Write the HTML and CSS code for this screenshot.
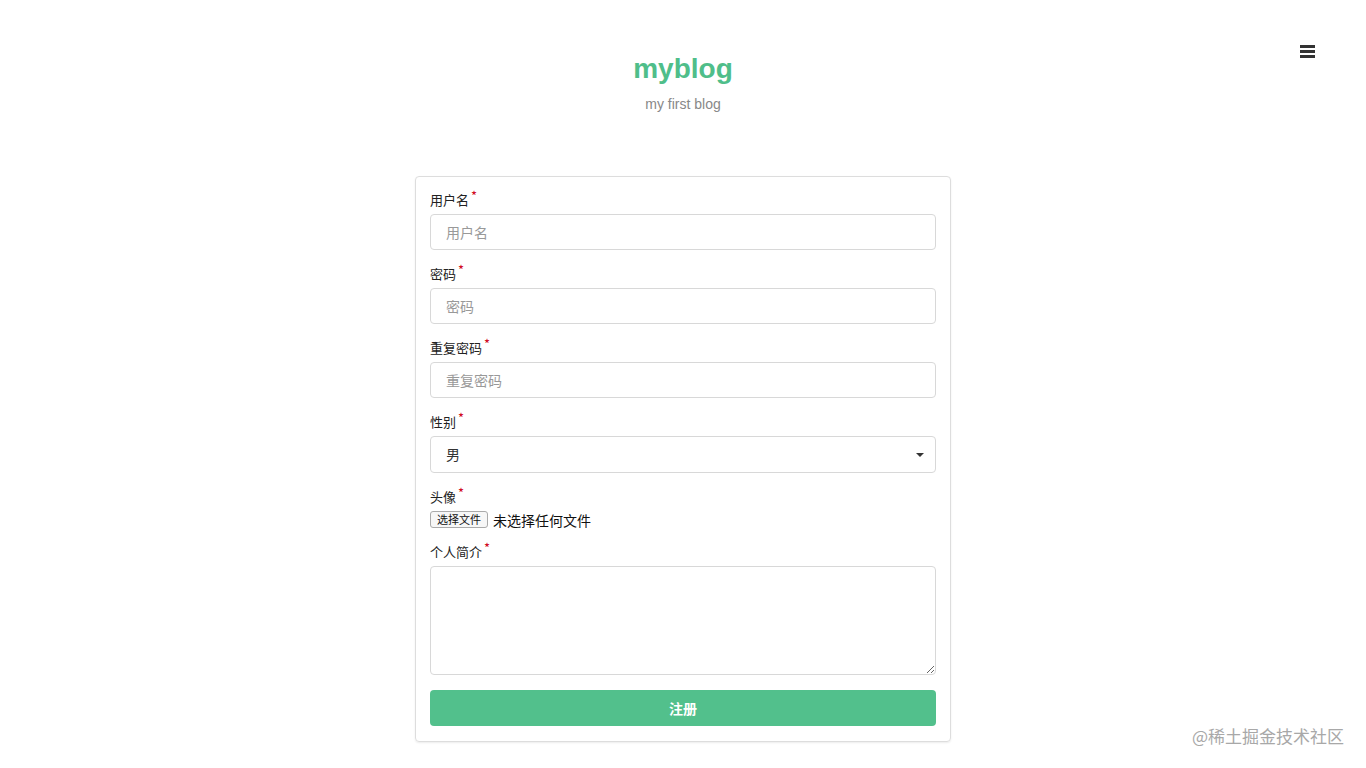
FILE: index.html
```html
<!DOCTYPE html>
<html lang="zh-CN">
<head>
  <meta charset="UTF-8" />
  <meta name="viewport" content="width=device-width, initial-scale=1" />
  <title>myblog - 注册</title>
  <link rel="stylesheet" href="styles.css">
</head>
<body>
  <div class="menuBtn">
    <span></span><span></span><span></span>
  </div>

  <div class="header">
    <h1 class="siteTitle">myblog</h1>
    <p class="siteDesc">my first blog</p>
  </div>

  <form class="signupBox">
    <div class="field">
      <label class="fieldLabel">用户名<i>*</i></label>
      <input class="textInput" type="text" placeholder="用户名" />
    </div>
    <div class="field">
      <label class="fieldLabel">密码<i>*</i></label>
      <input class="textInput" type="password" placeholder="密码" />
    </div>
    <div class="field">
      <label class="fieldLabel">重复密码<i>*</i></label>
      <input class="textInput" type="password" placeholder="重复密码" />
    </div>
    <div class="field">
      <label class="fieldLabel">性别<i>*</i></label>
      <div class="selectWrap">
        <select class="textInput">
          <option>男</option>
          <option>女</option>
        </select>
      </div>
    </div>
    <div class="field">
      <label class="fieldLabel">头像<i>*</i></label>
      <div class="fileRow">
        <label class="fileBtn">选择文件<input type="file" /></label>
        <span class="fileName">未选择任何文件</span>
      </div>
    </div>
    <div class="field">
      <label class="fieldLabel">个人简介<i>*</i></label>
      <textarea class="textInput bio"></textarea>
    </div>
    <button class="submitBtn" type="button">注册</button>
  </form>

  <div class="watermark">@稀土掘金技术社区</div>
</body>
</html>
```

FILE: styles.css
```css
body {
  margin: 0;
  font-family: 'Liberation Sans', 'Noto Sans CJK SC', sans-serif;
  background-color: #fff;
  color: #333;
  min-height: 100vh;
  position: relative;
}

.header {
  text-align: center;
  padding-top: 52px;
}

.siteTitle {
  margin: 0;
  font-size: 28px;
  line-height: 34px;
  font-weight: bold;
  color: #4fbe8a;
}

.siteDesc {
  margin: 8px 0 0;
  font-size: 14px;
  line-height: 20px;
  color: #888;
}

.menuBtn {
  position: absolute;
  top: 45px;
  right: 51px;
  width: 15px;
  display: flex;
  flex-direction: column;
  gap: 2px;
}

.menuBtn span {
  display: block;
  height: 3px;
  background-color: #333;
}

.signupBox {
  width: 506px;
  margin: 62px auto 0;
  padding: 14px 14px 15px;
  border: 1px solid #ddd;
  border-radius: 4px;
  box-shadow: 0 1px 2px rgba(0, 0, 0, 0.08);
}

.field {
  margin-bottom: 15px;
}

.fieldLabel {
  display: block;
  height: 18px;
  margin-bottom: 5px;
  font-family: 'Noto Sans CJK SC', sans-serif;
  font-size: 13px;
  line-height: 18px;
  color: #222;
}

.fieldLabel i {
  position: relative;
  top: -4px;
  margin-left: 2px;
  font-style: normal;
  font-size: 13px;
  line-height: 0;
  color: #d0021b;
}

.textInput {
  display: block;
  box-sizing: border-box;
  width: 100%;
  height: 36px;
  padding: 0 15px;
  border: 1px solid #d8d8d8;
  border-radius: 4px;
  background-color: #fff;
  font-family: 'Noto Sans CJK SC', sans-serif;
  font-size: 14px;
  color: #333;
  outline: none;
}

.textInput::placeholder {
  color: #999;
}

.selectWrap {
  position: relative;
}

.selectWrap select {
  height: 37px;
  padding-bottom: 2px;
  appearance: none;
  -webkit-appearance: none;
}

.selectWrap::after {
  content: "";
  position: absolute;
  right: 12px;
  top: 17px;
  border-left: 4px solid transparent;
  border-right: 4px solid transparent;
  border-top: 4px solid #333;
}

.fileRow {
  display: flex;
  align-items: center;
  gap: 5px;
  height: 17px;
  font-family: 'Noto Sans CJK SC', sans-serif;
}

.fileBtn {
  box-sizing: border-box;
  height: 17px;
  padding: 0 6px;
  border: 1px solid #aaa;
  border-radius: 3px;
  background-color: #f7f7f7;
  font-size: 11px;
  line-height: 15px;
  color: #111;
}

.fileBtn input {
  display: none;
}

.fileName {
  font-size: 14px;
  color: #111;
}

.bio {
  height: 109px;
  padding: 8px 15px;
  resize: vertical;
}

.submitBtn {
  display: block;
  width: 100%;
  height: 36px;
  border: none;
  border-radius: 4px;
  background-color: #52c08c;
  color: #fff;
  font-family: 'Noto Sans CJK SC', sans-serif;
  font-size: 14px;
  font-weight: bold;
  cursor: pointer;
}

.watermark {
  position: absolute;
  right: 22px;
  bottom: 20px;
  font-family: 'Noto Sans CJK SC', sans-serif;
  font-size: 17px;
  color: #a8a8a8;
}
```
